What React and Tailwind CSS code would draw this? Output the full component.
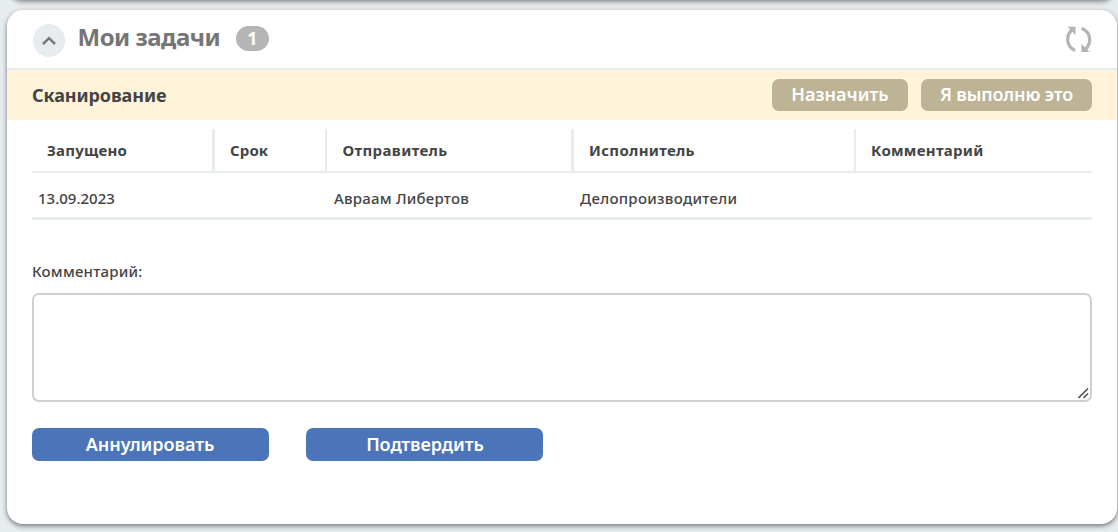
const columns = [
  { title: 'Запущено', value: '13.09.2023', head: 'w-[183px] border-r-3 pl-[15px] tracking-[0.2px]', cell: 'w-[183px] pl-[6px]' },
  { title: 'Срок', value: '', head: 'w-[112px] border-r-2 pl-[15px] tracking-[0.1px]', cell: 'w-[112px]' },
  { title: 'Отправитель', value: 'Авраам Либертов', head: 'w-[247px] border-r-3 pl-[15.500px] tracking-[0.38px]', cell: 'w-[247px] pl-[7px] tracking-[0.22px]' },
  { title: 'Исполнитель', value: 'Делопроизводители', head: 'w-[282px] border-r-2 pl-[15px] tracking-[0.3px]', cell: 'w-[282px] pl-[6px] tracking-[0.3px]' },
  { title: 'Комментарий', value: '', head: 'flex-1 pl-[15px] tracking-[0.3px]', cell: 'flex-1' },
];

function RefreshIcon() {
  return (
    <svg className="h-[27px] w-[27px]" viewBox="0 0 27 27" fill="none" stroke="#b4b4b4" strokeWidth="3.2">
      <path d="M10.100 24.500C5.200 22 2.600 18.300 2.600 13.400C2.600 9.900 4 6.600 6.800 4" />
      <path d="M16.500 2.200C21.800 4.500 24.700 8.600 24.700 13.400C24.700 17.400 23.300 20.400 20.500 23" />
      <path d="M2.500 0.800H10.600V9L8 6.500L5.200 3.400Z" fill="#b4b4b4" stroke="none" />
      <path d="M24.500 26H16.400V17.800Z" fill="#b4b4b4" stroke="none" />
    </svg>
  );
}

export default function App() {
  return (
    <div className="flex h-[532px] w-[1118px] flex-col overflow-hidden bg-[#e7ecef] pl-[7px] font-['Noto_Sans','Open_Sans',sans-serif] text-[#444]">
      <div className="-mt-5 h-5 w-[1110px] shrink-0 rounded-b-2xl bg-white shadow-[0_2px_4px_rgba(0,0,0,0.4)]" />

      <section className="mt-[10px] h-[514px] w-[1110px] shrink-0 overflow-clip rounded-2xl bg-white shadow-[0_2px_5px_rgba(0,0,0,0.5)]">
        <header className="flex h-[60px] items-start border-b-2 border-[#e7ecef] pr-[25px] pl-[26px]">
          <button className="mt-[14px] flex h-[33px] w-[32px] items-center justify-center rounded-full bg-[#e7ecef]">
            <svg className="h-[10px] w-[14px]" viewBox="0 0 14 10" fill="none" stroke="#777" strokeWidth="2.500">
              <path d="M1 8L7 2.200L13 8" />
            </svg>
          </button>
          <h1 className="mt-[10px] ml-[12.500px] w-[144.500px] text-[24px] leading-[34px] font-bold tracking-[-0.5px] whitespace-nowrap text-[#757575]">Мои задачи</h1>
          <span className="mt-[16px] ml-[14px] flex h-[25px] w-[33px] items-center justify-center rounded-full bg-[#b5b5b5] text-[18px] leading-[25px] font-bold text-white">1</span>
          <button className="mt-[16px] ml-auto">
            <RefreshIcon />
          </button>
        </header>

        <div className="flex h-[50px] items-center bg-[#fff4d9] pr-[25px] pl-[25px]">
          <h2 className="pb-px text-[18px] leading-[24px] font-bold tracking-[-0.1px]">Сканирование</h2>
          <div className="ml-auto flex gap-[13px] text-[18px] leading-[31px] font-semibold whitespace-nowrap text-white">
            <button className="h-[32px] w-[136px] rounded-[7px] bg-[#bdb395] pb-px">Назначить</button>
            <button className="h-[32px] w-[171px] rounded-[7px] bg-[#bdb395] pb-px tracking-[-0.15px]">Я выполню это</button>
          </div>
        </div>

        <div className="px-[25px] pt-[9px]">
          <div className="flex h-[44px] border-b-2 border-[#e7ecef] text-[15px] leading-[43px] font-bold">
            {columns.map((c) => (
              <div key={c.title} className={`${c.head} border-[#e7ecef]`}>{c.title}</div>
            ))}
          </div>
          <div className="flex h-[47px] border-b-3 border-[#e7ecef] text-[15px] leading-[51px] font-medium">
            {columns.map((c) => (
              <div key={c.title} className={c.cell}>{c.value}</div>
            ))}
          </div>

          <label className="mt-[40px] block text-[15px] leading-[22px] font-medium tracking-[0.22px]" htmlFor="comment">Комментарий:</label>
          <div className="relative mt-[11px] h-[109px] w-[1060px]">
            <textarea id="comment" className="block h-full w-full resize-none rounded-[7px] border-2 border-[#cfcfcf] bg-white" />
            <svg className="pointer-events-none absolute right-[3px] bottom-[3px] h-[11px] w-[11px]" viewBox="0 0 11 11" fill="none" stroke="#555" strokeWidth="1.600">
              <path d="M0.500 10L10 0.500M5.500 10L10 5.500" />
            </svg>
          </div>

          <div className="mt-[26px] flex gap-[37px] text-[18px] leading-[33px] font-semibold text-white">
            <button className="h-[33px] w-[237px] rounded-[7px] bg-[#4b75b8] pr-px tracking-[-0.05px]">Аннулировать</button>
            <button className="h-[33px] w-[237px] rounded-[7px] bg-[#4b75b8] pl-px tracking-[-0.05px]">Подтвердить</button>
          </div>
        </div>
      </section>
    </div>
  );
}
